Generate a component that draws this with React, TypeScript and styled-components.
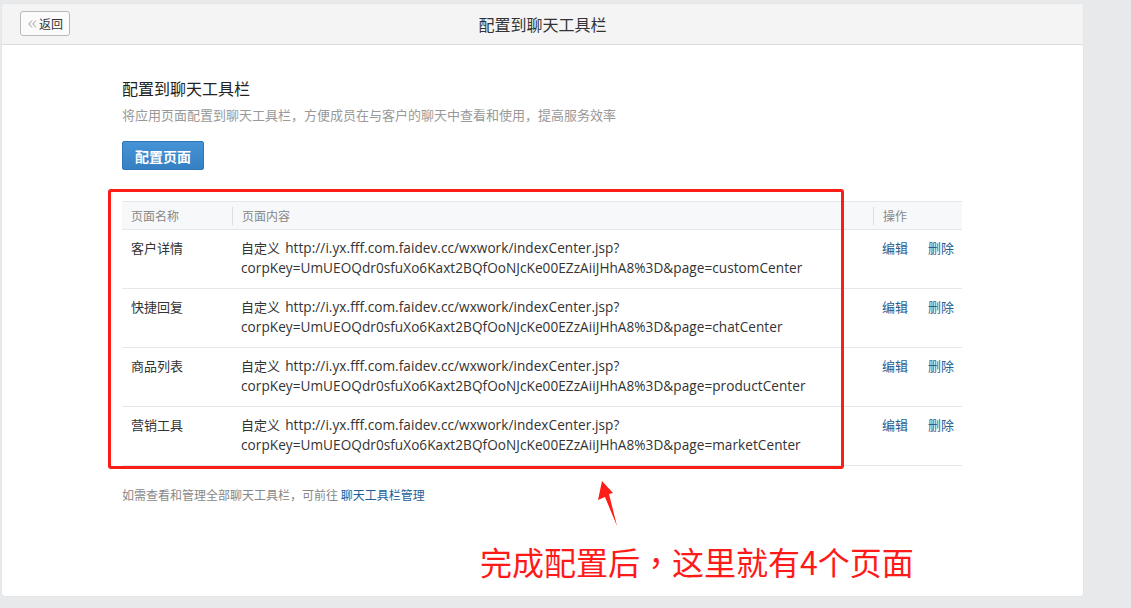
import React from "react";
import styled, { createGlobalStyle } from "styled-components";

const Global = createGlobalStyle`
  html, body { margin: 0; padding: 0; background: #e8e9eb; }
  body { font-family: "Open Sans", "Noto Sans CJK SC", sans-serif; color: #333; }
  * { box-sizing: border-box; }
`;

const Page = styled.div`
  width: 1131px;
  height: 608px;
  padding: 4px 0 0 2px;
  overflow: hidden;
`;

const Card = styled.div`
  position: relative;
  width: 1081px;
  height: 592px;
  background: #fff;
  border-radius: 3px;
  box-shadow: 0 0 1px rgba(0, 0, 0, 0.12);
`;

const Header = styled.div`
  position: relative;
  height: 41px;
  background: #f4f4f4;
  border-bottom: 1px solid #dcdcdc;
  border-radius: 3px 3px 0 0;
  display: flex;
  align-items: center;
  justify-content: center;
`;

const BackButton = styled.button`
  position: absolute;
  left: 18px;
  top: 7px;
  width: 50px;
  height: 25px;
  padding: 0 0 0 1px;
  background: #fbfbfb;
  border: 1px solid #b9b9b9;
  border-radius: 3px;
  font-family: "Noto Sans CJK SC", sans-serif;
  font-size: 12px;
  color: #333;
  display: flex;
  align-items: center;
  justify-content: center;
  gap: 2px;
`;

const HeaderTitle = styled.h1`
  margin: 0;
  font-family: "Noto Sans CJK SC", sans-serif;
  font-weight: 400;
  font-size: 16px;
  color: #333;
`;

const Content = styled.div`
  padding: 31px 0 0 120px;
`;

const Heading = styled.h2`
  margin: 0;
  font-family: "Noto Sans CJK SC", sans-serif;
  font-weight: 400;
  font-size: 16px;
  line-height: 24px;
  color: #222;
`;

const Desc = styled.p`
  margin: 5px 0 0;
  font-family: "Noto Sans CJK SC", sans-serif;
  font-size: 13px;
  line-height: 20px;
  color: #999;
`;

const PrimaryButton = styled.button`
  margin-top: 16px;
  width: 82px;
  height: 29px;
  border: 1px solid #2f78b8;
  border-radius: 2px;
  background: linear-gradient(#4593d6, #3580c2);
  color: #fff;
  font-family: "Noto Sans CJK SC", sans-serif;
  font-weight: 700;
  font-size: 14px;
  padding: 0;
`;

const Table = styled.div`
  margin-top: 31px;
  width: 840px;
  border-top: 1px solid #e6e7ea;
`;

const Row = styled.div<{ $head?: boolean }>`
  display: grid;
  grid-template-columns: 110px 641px 89px;
  border-bottom: 1px solid #e6e7ea;
  background: ${(p) => (p.$head ? "#f7f8fa" : "#fff")};
  height: ${(p) => (p.$head ? "28px" : "59px")};
  align-items: ${(p) => (p.$head ? "center" : "start")};
`;

const HeadCell = styled.div<{ $divider?: boolean }>`
  height: 18px;
  line-height: 18px;
  padding-left: 9px;
  font-family: "Noto Sans CJK SC", sans-serif;
  font-size: 12px;
  color: #888;
  border-left: ${(p) => (p.$divider ? "1px solid #dcdde0" : "none")};
`;

const Cell = styled.div`
  padding: 8px 0 0 9px;
  font-size: 13px;
  line-height: 20px;
  color: #333;
  font-family: "Noto Sans CJK SC", sans-serif;
`;

const UrlCell = styled(Cell)`
  font-family: "Open Sans", "Noto Sans CJK SC", sans-serif;
  font-size: 13.6px;
  letter-spacing: 0.05px;
`;

const Label = styled.span`
  font-family: "Noto Sans CJK SC", sans-serif;
  font-size: 13px;
  margin-right: 5px;
`;

const Actions = styled.div`
  display: flex;
  gap: 20px;
  padding: 8px 0 0 9px;
`;

const ActionLink = styled.a`
  font-family: "Noto Sans CJK SC", sans-serif;
  font-size: 13px;
  line-height: 20px;
  color: #2a5d8f;
  text-decoration: none;
`;

const Footer = styled.p`
  margin: 20px 0 0;
  font-family: "Noto Sans CJK SC", sans-serif;
  font-size: 12px;
  line-height: 18px;
  color: #888;
`;

const FooterLink = styled.a`
  color: #1f5d96;
  text-decoration: none;
`;

const RedBox = styled.div`
  position: absolute;
  left: 106px;
  top: 185px;
  width: 736px;
  height: 280px;
  border: 3px solid #fd1d17;
  border-radius: 3px;
  pointer-events: none;
`;

const Arrow = styled.svg`
  position: absolute;
  left: 590px;
  top: 472px;
`;

const Annotation = styled.div`
  position: absolute;
  left: 478px;
  top: 536px;
  font-family: "Noto Sans CJK SC", sans-serif;
  font-size: 32px;
  line-height: 42px;
  color: #ff1a1a;
  white-space: nowrap;
`;

const CenteredComma = styled.span`
  font-family: "Noto Sans CJK TC", sans-serif;
`;

const rows = [
  { name: "客户详情", page: "customCenter" },
  { name: "快捷回复", page: "chatCenter" },
  { name: "商品列表", page: "productCenter" },
  { name: "营销工具", page: "marketCenter" },
];

export default function App() {
  return (
    <>
      <Global />
      <Page>
        <Card>
          <Header>
            <BackButton>
              <svg width="9" height="8" viewBox="0 0 9 8">
                <path d="M4 0.5 L0.8 4 L4 7.5 M8 0.5 L4.8 4 L8 7.5" fill="none" stroke="#9a9a9a" strokeWidth="1" />
              </svg>
              返回
            </BackButton>
            <HeaderTitle>配置到聊天工具栏</HeaderTitle>
          </Header>
          <Content>
            <Heading>配置到聊天工具栏</Heading>
            <Desc>将应用页面配置到聊天工具栏，方便成员在与客户的聊天中查看和使用，提高服务效率</Desc>
            <PrimaryButton>配置页面</PrimaryButton>
            <Table>
              <Row $head>
                <HeadCell>页面名称</HeadCell>
                <HeadCell $divider>页面内容</HeadCell>
                <HeadCell $divider>操作</HeadCell>
              </Row>
              {rows.map((r) => (
                <Row key={r.name}>
                  <Cell>{r.name}</Cell>
                  <UrlCell>
                    <Label>自定义</Label>http://i.yx.fff.com.faidev.cc/wxwork/indexCenter.jsp?
                    <br />
                    corpKey=UmUEOQdr0sfuXo6Kaxt2BQfOoNJcKe00EZzAiiJHhA8%3D&amp;page={r.page}
                  </UrlCell>
                  <Actions>
                    <ActionLink>编辑</ActionLink>
                    <ActionLink>删除</ActionLink>
                  </Actions>
                </Row>
              ))}
            </Table>
            <Footer>
              如需查看和管理全部聊天工具栏，可前往 <FooterLink>聊天工具栏管理</FooterLink>
            </Footer>
          </Content>
          <RedBox />
          <Arrow width="40" height="60" viewBox="0 0 40 60">
            <polygon points="10,5 21,17 17,18 25,50 13,21 6,24" fill="#fd1d17" />
          </Arrow>
          <Annotation>
            完成配置后<CenteredComma>，</CenteredComma>这里就有4个页面
          </Annotation>
        </Card>
      </Page>
    </>
  );
}
